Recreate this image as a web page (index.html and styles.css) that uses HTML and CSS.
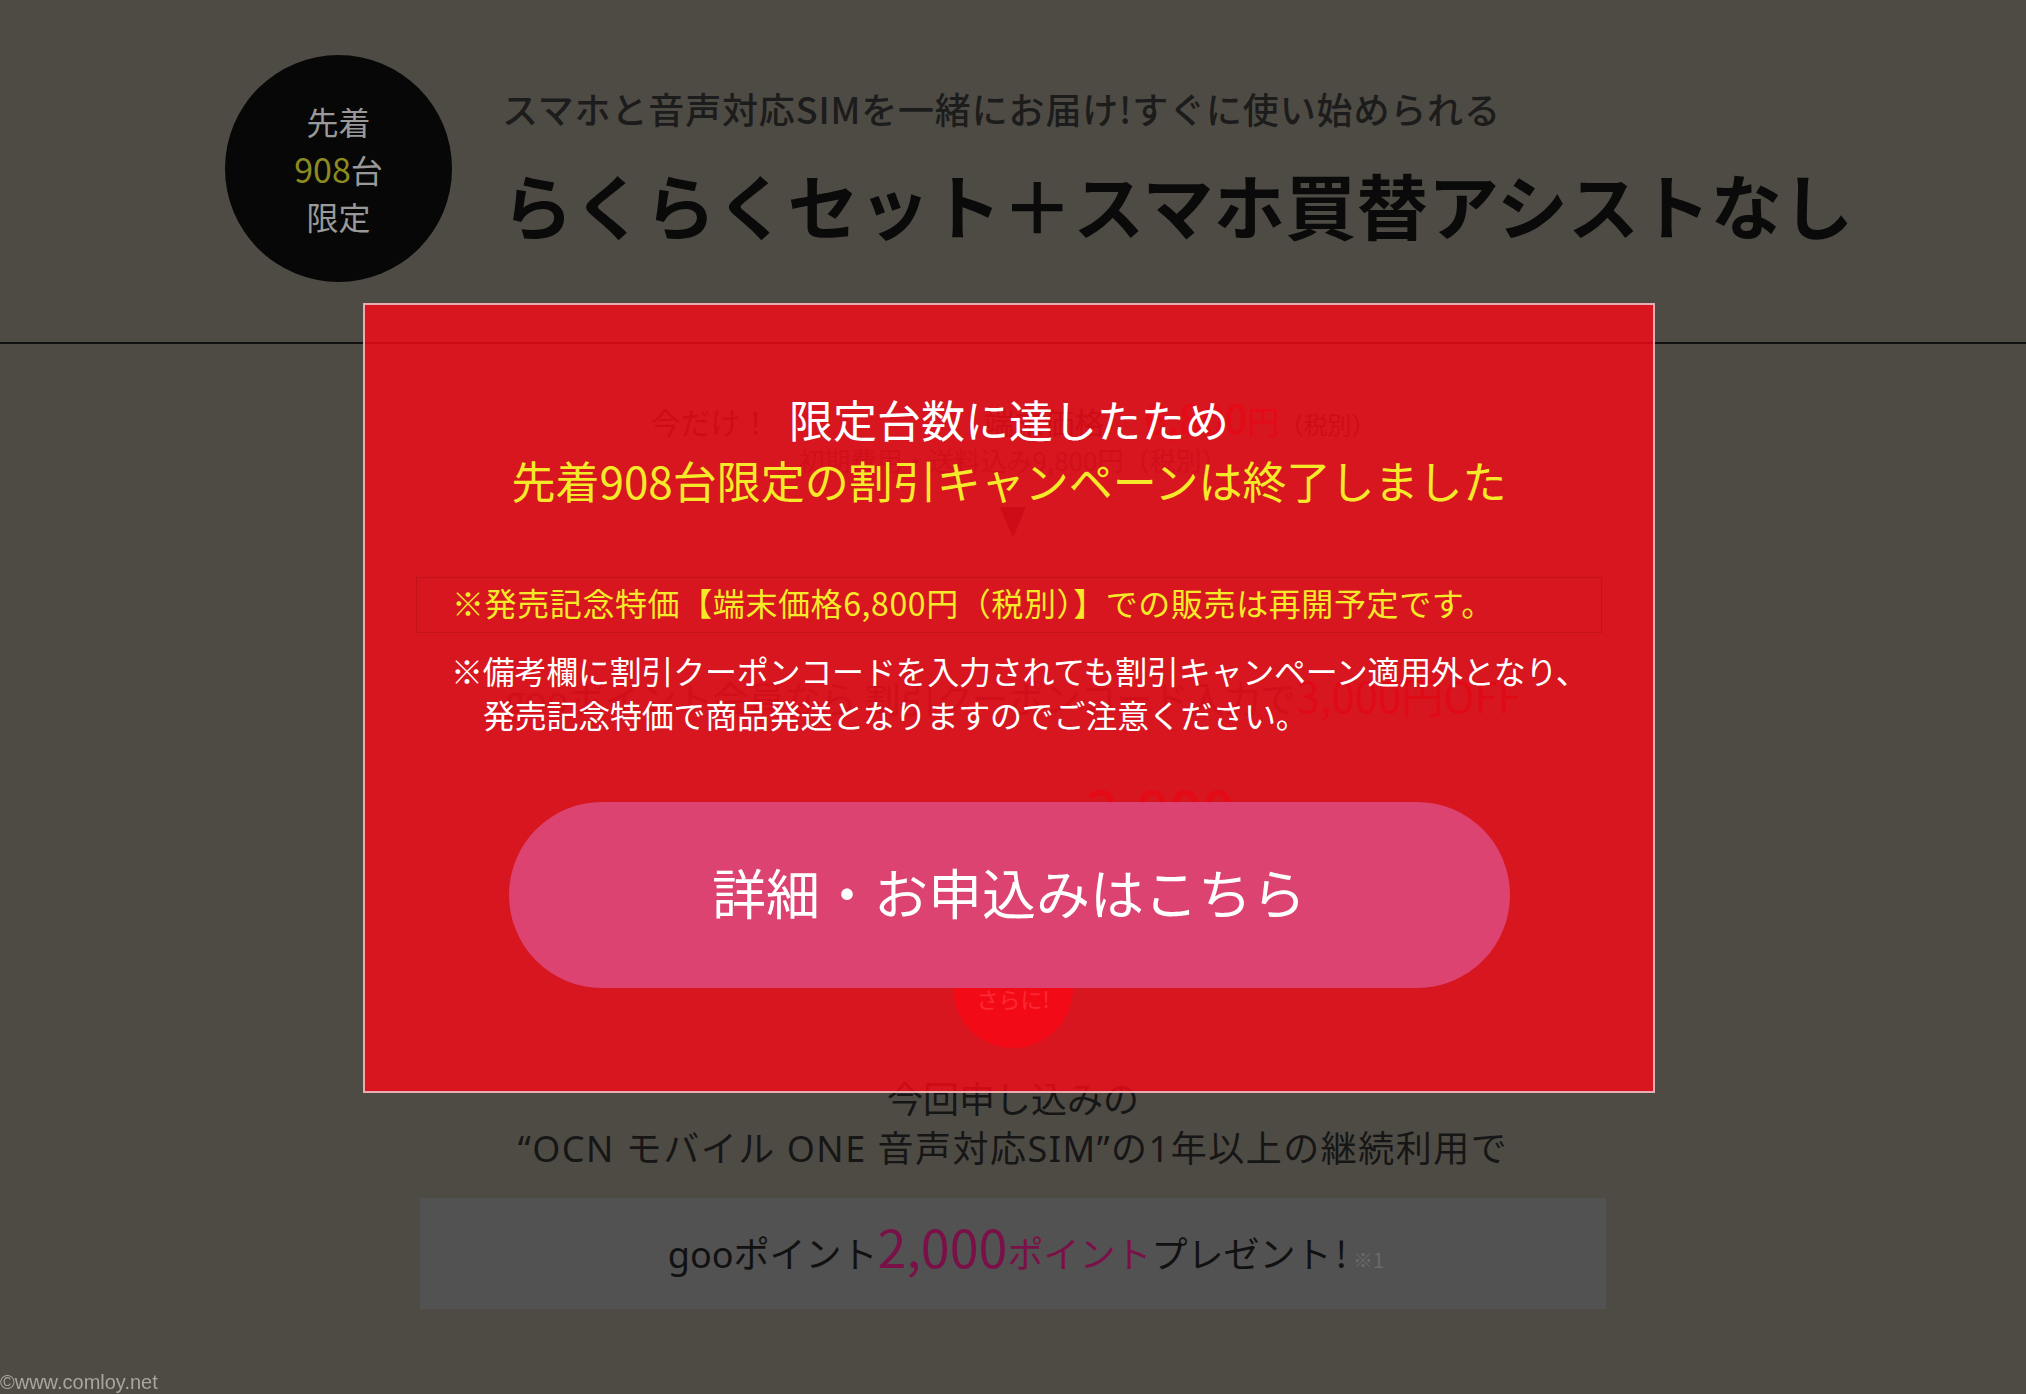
FILE: index.html
```html
<!DOCTYPE html>
<html lang="ja">
<head>
<meta charset="utf-8">
<title>らくらくセット＋スマホ買替アシストなし</title>
<link rel="stylesheet" href="styles.css">
</head>
<body>
<div class="page">
  <header class="hero">
    <div class="badge">
      <span>先着</span>
      <span><em>908</em>台</span>
      <span>限定</span>
    </div>
    <div class="hero-text">
      <p class="hero-sub">スマホと音声対応SIMを一緒にお届け!すぐに使い始められる</p>
      <h1 class="hero-title">らくらくセット＋スマホ買替アシストなし</h1>
    </div>
  </header>

  <main class="content">
    <p class="offer-now"><span class="lbl">今だけ！</span><span class="price"><span class="lbl2">端末価格</span><b>6,800</b><span class="yen">円</span><small>（税別）</small></span></p>
    <p class="offer-base">初期費用・送料込み9,800円（税別）</p>
    <div class="down-arrow"></div>
    <p class="offer-coupon">gooポイント会員なら 割引クーポンコード入力で<strong>3,000円OFF</strong></p>
    <p class="offer-final">キャンペーン適応後価格<b>3,800</b><span class="yen">円</span><small>（税別）</small></p>
    <div class="more-badge">さらに!</div>
    <p class="cond">今回申し込みの</p>
    <p class="cond cond-latin">“OCN モバイル ONE 音声対応SIM”の1年以上の継続利用で</p>
    <div class="goo-box">
      <span class="goo-word">goo</span><span>ポイント</span><span class="pt-num">2,000</span><span class="pt-unit">ポイント</span><span>プレゼント</span><span class="bang">!</span><span class="note-ref">※1</span>
    </div>
  </main>
</div>

<div class="modal" role="dialog" aria-label="キャンペーン終了のお知らせ">
  <p class="modal-lead">限定台数に達したため</p>
  <p class="modal-alert">先着908台限定の割引キャンペーンは終了しました</p>
  <p class="modal-box">※発売記念特価【端末価格6,800円（税別）】での販売は再開予定です。</p>
  <p class="modal-note">※備考欄に割引クーポンコードを入力されても割引キャンペーン適用外となり、<br>発売記念特価で商品発送となりますのでご注意ください。</p>
  <a class="modal-btn" href="#">詳細・お申込みはこちら</a>
</div>

<div class="credit">©www.comloy.net</div>
</body>
</html>
```

FILE: styles.css
```css
* {
  box-sizing: border-box;
}

html,
body {
  margin: 0;
  padding: 0;
  height: 100%;
}

body {
  background: #4e4b44;
  font-family: "Noto Sans CJK JP", "Noto Sans", sans-serif;
  color: #111;
  overflow: hidden;
  position: relative;
}

p,
h1 {
  margin: 0;
}

/* ---------- header ---------- */
.hero {
  display: flex;
  align-items: flex-start;
  height: 344px;
  padding: 55px 0 0 225px;
  border-bottom: 2px solid #111;
}

.badge {
  width: 227px;
  height: 227px;
  border-radius: 50%;
  background: #070707;
  color: #999;
  font-size: 32px;
  line-height: 47px;
  display: flex;
  flex-direction: column;
  align-items: center;
  justify-content: center;
  flex-shrink: 0;
}

.badge em {
  font-style: normal;
  color: #8c8a20;
  font-size: 34px;
}

.hero-text {
  margin-left: 50px;
  display: flex;
  flex-direction: column;
}

.hero-sub {
  margin-top: 28px;
  font-size: 36px;
  line-height: 50px;
  font-weight: 500;
  letter-spacing: 0.85px;
  color: #1c1c1c;
  white-space: nowrap;
}

.hero-title {
  margin-top: 20px;
  font-size: 71px;
  line-height: 100px;
  font-weight: 700;
  letter-spacing: 0.4px;
  color: #0a0a0a;
  white-space: nowrap;
}

/* ---------- page content (under the dialog) ---------- */
.content {
  display: flex;
  flex-direction: column;
  align-items: center;
}

.offer-now {
  margin-top: 52px;
  width: 725px;
  height: 50px;
  line-height: 50px;
  display: flex;
  justify-content: space-between;
  align-items: baseline;
  color: #1c1c1c;
  font-size: 30px;
}

.offer-now .lbl2 {
  margin-right: 40px;
}

.offer-now b,
.offer-final b {
  font-size: 40px;
  font-weight: 500;
  line-height: 1;
  color: #8a1018;
}

.offer-now .yen,
.offer-final .yen {
  font-size: 32px;
  line-height: 1;
  color: #8a1018;
}

.offer-now small {
  font-size: 24px;
}

.offer-base {
  height: 28px;
  font-size: 26px;
  line-height: 28px;
  color: #2a2a2a;
}

.down-arrow {
  margin-top: 33px;
  width: 0;
  height: 0;
  border-left: 13px solid transparent;
  border-right: 13px solid transparent;
  border-top: 31px solid #1c1c1c;
}

.offer-coupon {
  margin-top: 134px;
  height: 50px;
  font-size: 36px;
  line-height: 50px;
  color: #2a2a2a;
  white-space: nowrap;
}

.offer-coupon strong {
  font-weight: 400;
  font-size: 42px;
  line-height: 1;
  color: #7a1018;
}

.offer-final {
  margin-top: 58px;
  height: 50px;
  font-size: 36px;
  line-height: 50px;
  color: #2a2a2a;
  white-space: nowrap;
}

.offer-final b {
  font-size: 58px;
}

.offer-final small {
  font-size: 17px;
  line-height: 1;
}

.more-badge {
  margin-top: 98px;
  width: 120px;
  height: 120px;
  border-radius: 50%;
  background: #d8101c;
  color: #ffb0b0;
  font-size: 22px;
  display: flex;
  align-items: center;
  justify-content: center;
  padding-top: 20px;
}

.cond {
  margin-top: 27px;
  height: 44px;
  font-size: 36px;
  line-height: 44px;
  color: #161616;
  white-space: nowrap;
}

.cond-latin {
  margin-top: 8px;
  font-family: "Noto Sans", "Noto Sans CJK JP", sans-serif;
  letter-spacing: 1.5px;
}

.goo-box {
  margin-top: 27px;
  width: 1186px;
  height: 111px;
  background: #525252;
  display: flex;
  align-items: baseline;
  justify-content: center;
  padding: 18px 0 0 26px;
  font-size: 36px;
  line-height: 60px;
  color: #111;
}

.goo-word {
  font-family: "Noto Sans", sans-serif;
}

.pt-num {
  font-size: 52px;
  color: #7a1048;
}

.pt-unit {
  color: #7a1048;
}

.bang {
  margin: 0 6px 0 4px;
}

.note-ref {
  font-size: 20px;
  color: #6a6a6a;
}

/* ---------- dialog ---------- */
.modal {
  position: absolute;
  left: 363px;
  top: 303px;
  width: 1292px;
  height: 790px;
  border: 2px solid rgba(235, 225, 225, 0.75);
  background: rgba(250, 9, 22, 0.8);
  display: flex;
  flex-direction: column;
  align-items: center;
  padding-top: 84px;
  z-index: 10;
}

.modal-lead {
  font-size: 44px;
  line-height: 61px;
  color: #fff;
  white-space: nowrap;
}

.modal-alert {
  font-size: 44px;
  line-height: 61px;
  color: #f5ea2a;
  white-space: nowrap;
}

.modal-box {
  margin-top: 66px;
  width: 1186px;
  height: 56px;
  border: 1px solid rgba(0, 0, 0, 0.1);
  padding: 0 0 6px 35px;
  font-size: 32px;
  line-height: 48px;
  letter-spacing: 0.6px;
  color: #f5ea2a;
  white-space: nowrap;
}

.modal-note {
  margin-top: 15px;
  width: 1186px;
  padding-left: 67px;
  text-indent: -32px;
  font-size: 32px;
  line-height: 44px;
  letter-spacing: -0.25px;
  color: #fff;
  white-space: nowrap;
}

.modal-btn {
  margin-top: 66px;
  width: 1001px;
  height: 186px;
  border-radius: 93px;
  background: #dc4371;
  color: #fff;
  font-size: 54px;
  text-decoration: none;
  display: flex;
  align-items: center;
  justify-content: center;
  padding-bottom: 8px;
}

/* ---------- credit ---------- */
.credit {
  position: fixed;
  left: 0;
  bottom: 0;
  font-family: "Liberation Sans", Arial, sans-serif;
  font-size: 20px;
  line-height: 24px;
  color: #a9a59c;
  z-index: 20;
}
```
